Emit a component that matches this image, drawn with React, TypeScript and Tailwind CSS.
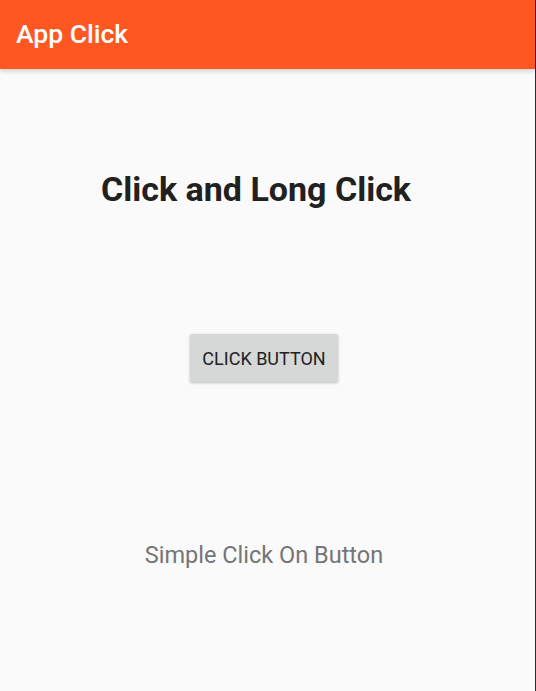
export default function App() {
  return (
    <div className="flex h-[691px] w-[536px] flex-col overflow-hidden border-r border-[#2a2a2a] bg-[#fafafa] font-['Roboto',sans-serif]">
      <header className="relative z-10 flex h-[69px] shrink-0 items-center bg-[#ff5722] px-4 shadow-[0_2px_5px_rgba(0,0,0,0.18)]">
        <h1 className="text-[26.5px] font-medium leading-none text-white">App Click</h1>
      </header>
      <main className="flex flex-col items-center pr-[7px]">
        <h2 className="mt-[101px] pr-[16px] text-[34px] font-bold leading-[38px] text-[#212121]">
          Click and Long Click
        </h2>
        <button className="mt-[126px] h-[48px] w-[148px] rounded-[2px] bg-[#d6d7d7] text-[18px] font-normal text-[#212121] shadow-[0_1px_3px_rgba(0,0,0,0.25)]">
          CLICK BUTTON
        </button>
        <p className="mt-[160px] text-[23.5px] leading-[26px] text-[#757575]">Simple Click On Button</p>
      </main>
    </div>
  );
}
